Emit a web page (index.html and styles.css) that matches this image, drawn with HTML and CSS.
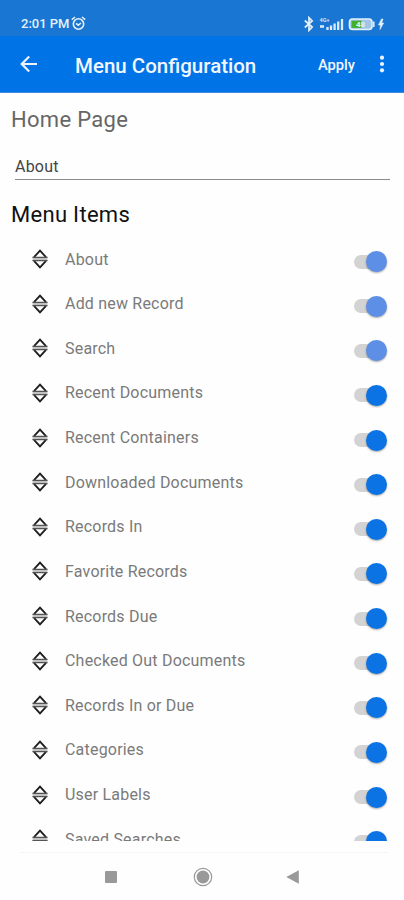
FILE: index.html
```
<!DOCTYPE html>
<html lang="en">
<head>
<meta charset="utf-8">
<title>Menu Configuration</title>
<link rel="stylesheet" href="styles.css">
</head>
<body>
<svg width="0" height="0" class="defs">
  <symbol id="drag" viewBox="0 0 16 20">
    <path d="M2 8.200 8 1.600l6 6.600M2 11.800l6 6.600 6-6.600" fill="none" stroke="#1c1c1c" stroke-width="1.800"/>
    <path d="M.4 8.400h15.200M.4 11.500h15.200" stroke="#555" stroke-width="1.500"/>
    <path d="M1 10h14" stroke="#bbb" stroke-width="1.600"/>
  </symbol>
</svg>
<div class="statusbar">
  <span class="time">2:01 PM</span>
  <svg class="alarm" width="15" height="15" viewBox="0 0 15 15" fill="none" stroke="#e4f1fb" stroke-width="1.600"><circle cx="7.500" cy="8" r="5.200"/><path d="M.8 3.600 4 1M14.200 3.600 11 1M5 7.400l2.300 1.800L10 7"/></svg>
  <svg class="status-icons" width="82" height="16" viewBox="0 0 82 16">
    <path d="M.8 4.500 8.200 11 5 14.300V1.700L8.200 5 .8 11.500" fill="none" stroke="#e4f1fb" stroke-width="1.700"/>
    <text x="15.500" y="6" class="net">4G+</text>
    <path d="M16 10.500h4M23.500 11v3M27 9.500V14M30.600 7.500V14M34.200 5.500V14M38 3v11" stroke="#dcebfa" stroke-width="2.300"/>
    <rect x="45.500" y="3" width="22.500" height="10.500" rx="3" fill="#9fc6e6" stroke="#e4f1fb" stroke-width="1.600"/>
    <path d="M47.500 4.700h10v7.200h-10z" fill="#43b02c"/>
    <text x="52" y="11" class="pct">48</text>
    <path d="M69.800 5.500v5.500" stroke="#e4f1fb" stroke-width="1.500"/>
    <path d="M77.500 3l-3 6h2L76 13.500l3.600-6.500h-2L79 3z" fill="#e4f1fb" stroke="#e4f1fb" stroke-width=".6"/>
  </svg>
</div>
<header class="appbar">
  <svg class="back" width="18" height="18" viewBox="0 0 18 18" fill="none" stroke="#eaf3ff" stroke-width="2.200"><path d="M17 9H2M9.200 1.500 1.700 9l7.500 7.500"/></svg>
  <h1>Menu Configuration</h1>
  <span class="apply">Apply</span>
  <svg class="more" width="6" height="18" viewBox="0 0 6 18" fill="#eaf3ff"><circle cx="3" cy="2.700" r="2.100"/><circle cx="3" cy="9" r="2.100"/><circle cx="3" cy="15.300" r="2.100"/></svg>
</header>
<main>
  <h2 class="home">Home Page</h2>
  <div class="field">About</div>
  <h2 class="items">Menu Items</h2>
  <ul class="list">
    <li><svg class="drag"><use href="#drag"/></svg><span>About</span><i class="switch locked"></i></li>
    <li><svg class="drag"><use href="#drag"/></svg><span>Add new Record</span><i class="switch locked"></i></li>
    <li><svg class="drag"><use href="#drag"/></svg><span>Search</span><i class="switch locked"></i></li>
    <li><svg class="drag"><use href="#drag"/></svg><span>Recent Documents</span><i class="switch"></i></li>
    <li><svg class="drag"><use href="#drag"/></svg><span>Recent Containers</span><i class="switch"></i></li>
    <li><svg class="drag"><use href="#drag"/></svg><span>Downloaded Documents</span><i class="switch"></i></li>
    <li><svg class="drag"><use href="#drag"/></svg><span>Records In</span><i class="switch"></i></li>
    <li><svg class="drag"><use href="#drag"/></svg><span>Favorite Records</span><i class="switch"></i></li>
    <li><svg class="drag"><use href="#drag"/></svg><span>Records Due</span><i class="switch"></i></li>
    <li><svg class="drag"><use href="#drag"/></svg><span>Checked Out Documents</span><i class="switch"></i></li>
    <li><svg class="drag"><use href="#drag"/></svg><span>Records In or Due</span><i class="switch"></i></li>
    <li><svg class="drag"><use href="#drag"/></svg><span>Categories</span><i class="switch"></i></li>
    <li><svg class="drag"><use href="#drag"/></svg><span>User Labels</span><i class="switch"></i></li>
    <li><svg class="drag"><use href="#drag"/></svg><span>Saved Searches</span><i class="switch"></i></li>
  </ul>
</main>
<nav class="navbar">
  <svg width="14" height="14"><rect x="1" y="1" width="12" height="12" rx="1" fill="#999"/></svg>
  <svg width="20" height="20" viewBox="0 0 20 20"><circle cx="10" cy="10" r="8.700" fill="none" stroke="#999" stroke-width="1.200"/><circle cx="10" cy="10" r="6.400" fill="#999"/></svg>
  <svg width="14" height="14"><path d="M.3 7 12.800.300v13.400z" fill="#999"/></svg>
</nav>
</body>
</html>
```
FILE: styles.css
```
* { box-sizing: border-box; }
body { margin: 0; width: 404px; height: 900px; overflow: hidden; background: #fefefe; font-family: Roboto, sans-serif; display: flex; flex-direction: column; }
h1, h2, ul { margin: 0; padding: 0; font-weight: 400; }
svg { display: block; flex: none; }
.defs { position: absolute; }
.statusbar { height: 36px; flex: none; background: #1976d2; display: flex; align-items: center; padding: 11px 18px 0 21px; color: #e4f1fb; }
.time { font-size: 13px; font-weight: 500; line-height: 16px; width: 50px; white-space: nowrap; }
.status-icons { margin-left: auto; }
.net { font-size: 5.500px; font-weight: 700; fill: #cfe3f7; }
.pct { font-size: 8px; font-weight: 700; fill: #e8f4e8; }
.appbar { height: 57px; flex: none; background: #0073e6; border-bottom: 1px solid #3c8be0; display: flex; align-items: center; padding: 1px 19px 0 20px; color: #f1f7ff; }
h1 { font-size: 20.500px; font-weight: 500; margin-left: 37px; line-height: 24px; padding-top: 2px; }
.appbar svg { margin-top: -1px; }
.apply { font-size: 14.700px; font-weight: 500; margin-left: auto; padding-top: 1px; }
.more { margin-left: 24px; }
main { height: 748px; flex: none; display: flex; flex-direction: column; }
h2 { font-size: 22px; line-height: 28px; margin-left: 11px; letter-spacing: .3px; }
.home { margin-top: 13px; color: #666; }
.field { margin: 18px 14px 0 15px; height: 28px; border-bottom: 1px solid #8a8a8a; font-size: 16px; line-height: 30px; letter-spacing: .2px; color: #444; }
.items { margin-top: 21px; color: #111; }
.list { list-style: none; flex: 1; overflow: hidden; padding-top: 7.700px; }
.list li { height: 44.630px; display: flex; align-items: center; padding: 0 17px 0 32px; }
.drag { width: 16px; height: 20px; margin-right: 17px; }
.list span { font-size: 16px; line-height: 20px; padding-top: 1px; color: #7a7a7a; letter-spacing: .2px; }
.switch { width: 33px; height: 21px; margin: 5px 0 0 auto; position: relative; display: block; }
.switch::before { content: ""; position: absolute; left: 0; top: 3.500px; width: 30px; height: 14px; border-radius: 7px; background: #d3d3d3; }
.switch::after { content: ""; position: absolute; right: 0; top: 0; width: 21px; height: 21px; border-radius: 50%; background: #0b73e4; box-shadow: 0 1px 2px rgba(0, 0, 0, .35); }
.switch.locked::after { background: #5d8fe6; }
.navbar { margin: 11px 16px 0 20px; border-top: 1px solid #f5f5f5; flex: 1; display: flex; gap: 75px; align-items: center; justify-content: flex-start; padding: 0 0 0 84px; }
.navbar svg:last-child { margin-left: -2px; }
```
